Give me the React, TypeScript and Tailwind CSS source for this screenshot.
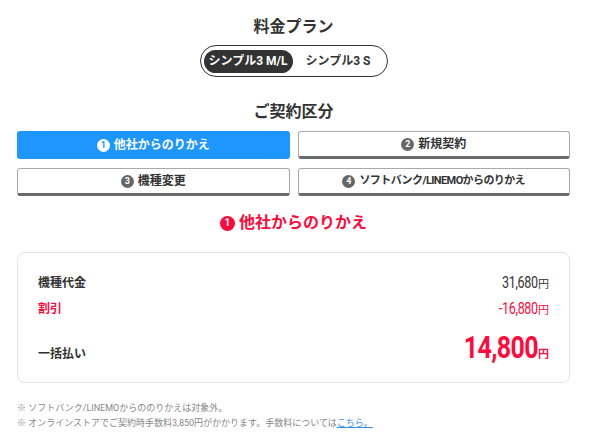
import React, { useState } from 'react'

const font = { fontFamily: '"Roboto", "Noto Sans CJK JP", sans-serif' }

const tabs = [
  { no: 1, label: '他社からのりかえ' },
  { no: 2, label: '新規契約' },
  { no: 3, label: '機種変更' },
  { no: 4, label: 'ソフトバンク/LINEMOからのりかえ' },
]

function Num({ n, active }: { n: number; active: boolean }) {
  return (
    <span
      className={`inline-flex h-[13px] w-[13px] items-center justify-center rounded-full text-[9px] font-bold leading-none tracking-normal ${
        active ? 'bg-white text-[#1e96ff]' : 'bg-[#666] text-white'
      }`}
    >
      {n}
    </span>
  )
}

function Yen({ value, className, size }: { value: string; className: string; size: string }) {
  return (
    <span className={`flex items-baseline justify-end ${className}`}>
      <span className={`inline-block origin-right scale-x-[0.78] tracking-tight ${size}`}>{value}</span>
      <span className="text-[11px]">円</span>
    </span>
  )
}

export default function App() {
  const [plan, setPlan] = useState(0)
  const [tab, setTab] = useState(0)

  return (
    <div className="w-[590px] h-[438px] bg-white text-[#333] overflow-hidden" style={font}>
      <div className="pl-[17px] pr-[20px] pt-[17px]">
        <h2 className="text-center text-[16px] font-bold leading-[20px]">料金プラン</h2>
        <div className="mt-[8px] flex justify-center">
          <div className="flex h-[32px] w-[188px] items-center rounded-full border-[1.5px] border-[#333] px-[3px]">
            {['シンプル3 M/L', 'シンプル3 S'].map((p, i) => (
              <button
                key={p}
                onClick={() => setPlan(i)}
                className={`h-[23px] rounded-full text-[12px] font-bold ${
                  i === 0 ? 'w-[89px]' : 'flex-1'
                } ${plan === i ? 'bg-[#333] text-white' : 'text-[#333]'}`}
              >
                {p}
              </button>
            ))}
          </div>
        </div>

        <h2 className="mt-[25px] text-center text-[16px] font-bold leading-[20px]">ご契約区分</h2>
        <div className="mt-[9px] grid grid-cols-2 gap-x-[8px] gap-y-[9px]">
          {tabs.map((t, i) => {
            const active = tab === i
            return (
              <button
                key={t.no}
                onClick={() => setTab(i)}
                className={`flex h-[28px] items-center justify-center gap-[4px] rounded-[3px] font-bold ${
                  active
                    ? 'bg-[#1e96ff] text-white'
                    : 'border border-b-[3px] border-[#aaa] border-b-[#6b6b6b] bg-white text-[#333]'
                } ${t.no === 4 ? 'text-[11px] tracking-[-0.6px]' : 'text-[12px]'}`}
              >
                <Num n={t.no} active={active} />
                {t.label}
              </button>
            )
          })}
        </div>

        <div className="mt-[15px] flex items-center justify-center gap-[4px] text-[16px] font-bold text-[#ff0a3c]">
          <span className="inline-flex h-[15px] w-[15px] items-center justify-center rounded-full bg-[#ff0a3c] text-[10px] leading-none text-white">
            {tabs[tab].no}
          </span>
          {tabs[tab].label}
        </div>

        <div className="mt-[17px] h-[131px] rounded-[8px] border border-[#e3e3e3] px-[20px] pt-[20px]">
          <div className="flex items-center justify-between h-[20px]">
            <span className="text-[12px] font-bold">機種代金</span>
            <Yen value="31,680" className="text-[#333]" size="text-[16px]" />
          </div>
          <div className="mt-[6px] flex items-center justify-between h-[20px]">
            <span className="text-[12px] font-bold text-[#ff0a3c]">割引</span>
            <Yen value="-16,880" className="text-[#ff0a3c]" size="text-[16px]" />
          </div>
          <div className="mt-[10px] flex items-end justify-between h-[36px]">
            <span className="pb-[2px] text-[12px] font-bold">一括払い</span>
            <Yen value="14,800" className="font-bold text-[#ff0a3c]" size="text-[32px] leading-[36px]" />
          </div>
        </div>

        <div className="mt-[18px] text-[9px] leading-[15px] text-[#888]">
          <p>※ ソフトバンク/LINEMOからののりかえは対象外。</p>
          <p>
            ※ オンラインストアでご契約時手数料3,850円がかかります。手数料については
            <a href="#" className="text-[#3b8ee8] underline">
              こちら。
            </a>
          </p>
        </div>
      </div>
    </div>
  )
}
